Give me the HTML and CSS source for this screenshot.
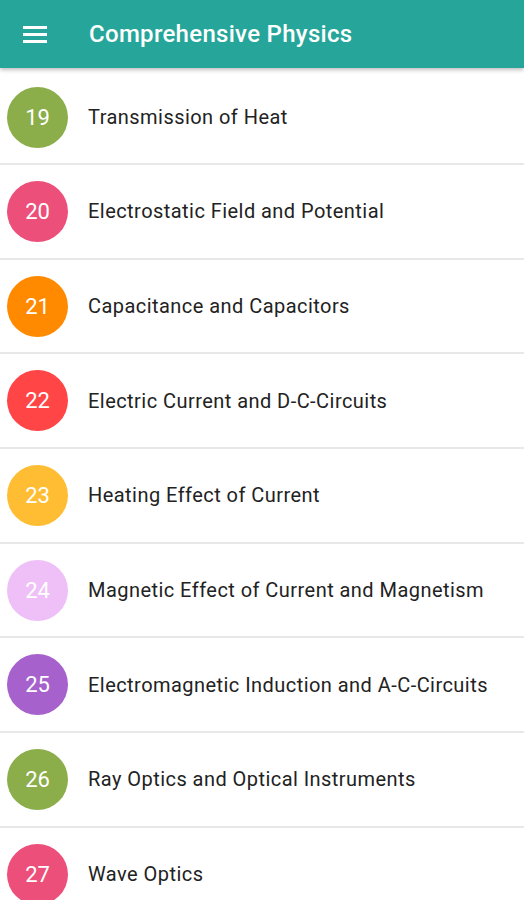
FILE: index.html
```html
<!DOCTYPE html>
<html>
<head>
<meta charset="utf-8">
<link rel="stylesheet" href="styles.css">
</head>
<body>
<header class="appbar">
  <svg class="menu" width="24" height="18" viewBox="0 0 24 18">
    <rect x="0" y="0" width="24" height="3" fill="#fff"/>
    <rect x="0" y="7" width="24" height="3" fill="#fff"/>
    <rect x="0" y="14" width="24" height="3" fill="#fff"/>
  </svg>
  <h1 class="title">Comprehensive Physics</h1>
</header>
<ul class="list">
  <li class="row"><span class="badge green">19</span><span class="label">Transmission of Heat</span></li>
  <li class="row"><span class="badge pink">20</span><span class="label">Electrostatic Field and Potential</span></li>
  <li class="row"><span class="badge orange">21</span><span class="label">Capacitance and Capacitors</span></li>
  <li class="row"><span class="badge red">22</span><span class="label">Electric Current and D-C-Circuits</span></li>
  <li class="row"><span class="badge amber">23</span><span class="label">Heating Effect of Current</span></li>
  <li class="row"><span class="badge lilac">24</span><span class="label">Magnetic Effect of Current and Magnetism</span></li>
  <li class="row"><span class="badge purple">25</span><span class="label">Electromagnetic Induction and A-C-Circuits</span></li>
  <li class="row"><span class="badge green">26</span><span class="label">Ray Optics and Optical Instruments</span></li>
  <li class="row"><span class="badge pink">27</span><span class="label">Wave Optics</span></li>
</ul>
</body>
</html>
```
FILE: styles.css
```css
html, body {
  margin: 0;
  padding: 0;
  background: #fff;
  font-family: Roboto, "Liberation Sans", sans-serif;
  overflow: hidden;
}
.appbar {
  position: relative;
  z-index: 2;
  height: 68px;
  background: #26a69a;
  display: flex;
  align-items: center;
  box-shadow: 0 2px 4px rgba(0,0,0,0.25);
}
.menu {
  margin-left: 23px;
  margin-top: 1px;
  flex: none;
}
.title {
  margin: 0 0 0 42px;
  color: #fff;
  font-size: 24px;
  font-weight: 500;
  letter-spacing: 0.3px;
}
.list {
  list-style: none;
  margin: 0;
  padding: 0;
}
.row {
  height: 92.7px;
  border-bottom: 2px solid #e8e8e8;
  display: flex;
  align-items: center;
}
.row:first-child {
  box-sizing: border-box;
  height: 97px;
  padding-top: 3px;
}
.badge {
  width: 61px;
  height: 61px;
  border-radius: 50%;
  margin-left: 7px;
  flex: none;
  display: flex;
  align-items: center;
  justify-content: center;
  color: #fff;
  font-size: 22px;
}
.label {
  margin-left: 20px;
  font-size: 20px;
  color: #222;
  letter-spacing: 0.45px;
}
.green { background: #8bae4a; }
.pink { background: #ec4f79; }
.orange { background: #ff8a00; }
.red { background: #ff4545; }
.amber { background: #ffbd33; }
.lilac { background: #efc0f7; }
.purple { background: #a661cc; }
```
